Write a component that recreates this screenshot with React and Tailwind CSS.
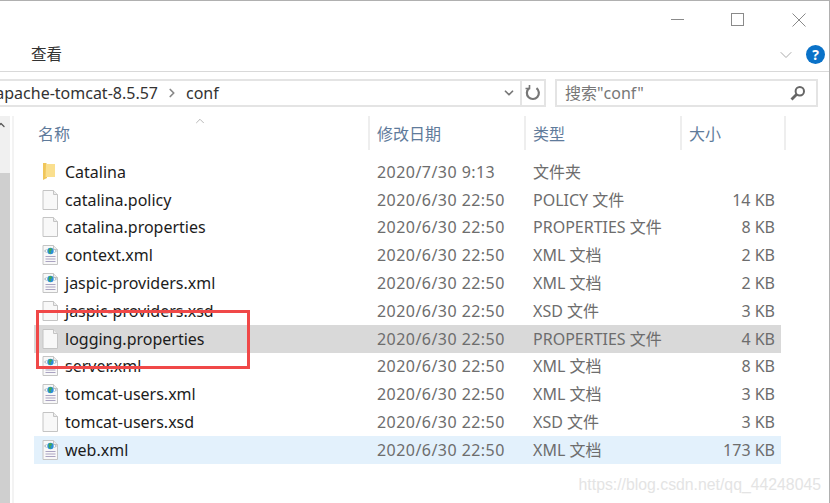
import { ChevronDown, ChevronRight, ChevronUp } from "lucide-react";

const font = "font-['Noto_Sans','Noto_Sans_CJK_SC',sans-serif]";

const files = [
  { name: "Catalina", date: "2020/7/30 9:13", type: "文件夹", size: "", icon: "folder" },
  { name: "catalina.policy", date: "2020/6/30 22:50", type: "POLICY 文件", size: "14 KB", icon: "file" },
  { name: "catalina.properties", date: "2020/6/30 22:50", type: "PROPERTIES 文件", size: "8 KB", icon: "file" },
  { name: "context.xml", date: "2020/6/30 22:50", type: "XML 文档", size: "2 KB", icon: "xml" },
  { name: "jaspic-providers.xml", date: "2020/6/30 22:50", type: "XML 文档", size: "2 KB", icon: "xml" },
  { name: "jaspic-providers.xsd", date: "2020/6/30 22:50", type: "XSD 文件", size: "3 KB", icon: "file" },
  { name: "logging.properties", date: "2020/6/30 22:50", type: "PROPERTIES 文件", size: "4 KB", icon: "file", bg: "bg-[#d9d9d9]" },
  { name: "server.xml", date: "2020/6/30 22:50", type: "XML 文档", size: "8 KB", icon: "xml" },
  { name: "tomcat-users.xml", date: "2020/6/30 22:50", type: "XML 文档", size: "3 KB", icon: "xml" },
  { name: "tomcat-users.xsd", date: "2020/6/30 22:50", type: "XSD 文件", size: "3 KB", icon: "file" },
  { name: "web.xml", date: "2020/6/30 22:50", type: "XML 文档", size: "173 KB", icon: "xml", bg: "bg-[#e3f1fc]" },
];

function FileIcon({ kind }) {
  if (kind === "folder") {
    return (
      <svg width="16" height="18" viewBox="0 0 16 18">
        <path d="M1 0h3l1 1v14l-4 2z" fill="#f0c65a" />
        <path d="M4 1h9v13H3.5z" fill="#fadf8e" />
      </svg>
    );
  }
  return (
    <svg width="17" height="20" viewBox="0 0 17 20">
      <path d="M1 .5h10.5l4 4v15H1z" fill="#f8f8f8" stroke="#c4c4c4" />
      <path d="M11.5.5v4h4" fill="#ececec" stroke="#c4c4c4" />
      {kind === "xml" && (
        <>
          <path d="M4.5 4.5l-2 1.5 2 1.5M12.5 4.5l2 1.5-2 1.5" fill="none" stroke="#a9b4c0" />
          <circle cx="8.5" cy="6" r="3.2" fill="#2b8fd6" />
          <path d="M7 3.6l2.5-.4.5 1.8-1.8 1.2 1 1.8-1.6.6-1-2.4z" fill="#45a94f" />
          <path d="M3.5 11.5h10M3.5 14h10M3.5 16.5h10" stroke="#aaa3c2" />
        </>
      )}
    </svg>
  );
}

function HeaderCell({ label, className }) {
  return (
    <div className={`h-[34px] border-r-2 border-[#eeeeee] text-[16px] leading-[36px] text-[#5f7b9b] ${className}`}>
      {label}
    </div>
  );
}

function FileRow({ file }) {
  return (
    <div className={`grid h-[27.8px] w-[747px] grid-cols-[343px_156px_156px_92px] items-center text-[16px] ${file.bg || ""}`}>
      <div className="flex items-center">
        <div className="ml-2 flex w-[23px] shrink-0 items-center">
          <FileIcon kind={file.icon} />
        </div>
        <span className="text-[#1c1c1c]">{file.name}</span>
      </div>
      <div className="tracking-[0.45px] text-[#6d6d6d]">{file.date}</div>
      <div className="text-[#6d6d6d]">{file.type}</div>
      <div className="pr-1.5 text-right text-[#6d6d6d]">{file.size}</div>
    </div>
  );
}

export default function App() {
  return (
    <div className={`relative h-[503px] w-[830px] overflow-hidden border-t border-r border-[#b0b0b0] bg-white ${font}`}>
      {/* title bar */}
      <div className="flex h-[37px] items-center justify-end gap-[47px] pr-[23px]">
        <div className="h-px w-[13px] bg-[#8a8a8a]" />
        <div className="h-[13px] w-[13px] border border-[#8a8a8a]" />
        <svg width="14" height="14" viewBox="0 0 14 14" stroke="#8a8a8a" className="ml-[1px]">
          <path d="M.5.5l13 13M13.5.5l-13 13" />
        </svg>
      </div>

      {/* ribbon */}
      <div className="flex h-[34px] items-center justify-between border-b border-[#d9d9d9] pl-[31px] pr-[4px]">
        <span className="text-[15.5px] text-[#333]">查看</span>
        <div className="flex items-center gap-[10px]">
          <ChevronDown size={20} strokeWidth={1.2} className="text-[#aaa]" />
          <div className="flex h-[19px] w-[19px] items-center justify-center rounded-full bg-[#0a72c8] text-[14px] font-bold text-white">
            ?
          </div>
        </div>
      </div>

      {/* address bar + search */}
      <div className="flex h-[44px] items-center pr-[11px] pt-[7px] pb-[9px]">
        <div className="flex h-[28px] w-[546px] items-center border-y-2 border-r-2 border-[#e4e4e4]">
          <span className="flex w-[158px] justify-end overflow-hidden whitespace-nowrap text-[16px] text-[#333]">
            apache-tomcat-8.5.57
          </span>
          <ChevronRight size={14} strokeWidth={3} className="ml-[7px] text-[#888]" />
          <span className="ml-[7px] text-[16px] text-[#333]">conf</span>
          <ChevronDown size={14} strokeWidth={3} className="ml-auto mr-[2px] text-[#777]" />
          <div className="ml-[2px] flex h-full w-[24px] items-center justify-center border-l-2 border-[#e4e4e4]">
            <svg width="16" height="16" viewBox="0 0 16 16" fill="none" stroke="#777" strokeWidth="2.2">
              <path d="M11.5 3.2A6 6 0 1 1 4 3.4" />
              <path d="M4.5 0.5v4h-4" strokeWidth="1.6" transform="translate(0 -1)" />
            </svg>
          </div>
        </div>
        <div className="ml-[9px] flex h-[28px] flex-1 items-center justify-between border-2 border-[#e4e4e4] pl-2 pr-[10px]">
          <span className="text-[16px] text-[#777]">搜索"conf"</span>
          <svg width="16" height="16" viewBox="0 0 16 16" fill="none" stroke="#666">
            <circle cx="9.8" cy="6.2" r="4.2" strokeWidth="2" />
            <path d="M6.5 9.5L1.5 14.5" strokeWidth="2.8" />
          </svg>
        </div>
      </div>

      <div className="flex">
        {/* scrollbar */}
        <div className="flex h-[388px] w-[10px] flex-col bg-[#f0f0f0]">
          <ChevronUp size={12} strokeWidth={2.5} className="-ml-[5px] mt-[3px] text-[#555]" />
          <div className="mt-[42px] flex-1 bg-[#cfcfcf]" />
        </div>

        {/* file list */}
        <div className="ml-[2px] flex-1 border-l-2 border-[#f3f3f3] pl-[20px]">
          <div className="relative flex h-[42px] items-start">
            <HeaderCell label="名称" className="w-[336px] pl-1" />
            <HeaderCell label="修改日期" className="w-[156px] pl-[7px]" />
            <HeaderCell label="类型" className="w-[156px] pl-[7px]" />
            <HeaderCell label="大小" className="w-[104px] pl-[7px]" />
            <ChevronUp size={14} strokeWidth={1.2} className="absolute left-[159px] -top-[2px] text-[#999]" />
          </div>
          {files.map((file) => (
            <FileRow key={file.name} file={file} />
          ))}
        </div>
      </div>

      {/* red annotation box */}
      <div className="absolute left-[36px] top-[309px] h-[59px] w-[214px] border-[3px] border-[#f04848]" />

      {/* watermark */}
      <div className="absolute right-[8px] top-[472px] font-['Liberation_Sans',sans-serif] text-[15.8px] text-[#e4e4e4]">
        https://blog.csdn.net/qq_44248045
      </div>
    </div>
  );
}
